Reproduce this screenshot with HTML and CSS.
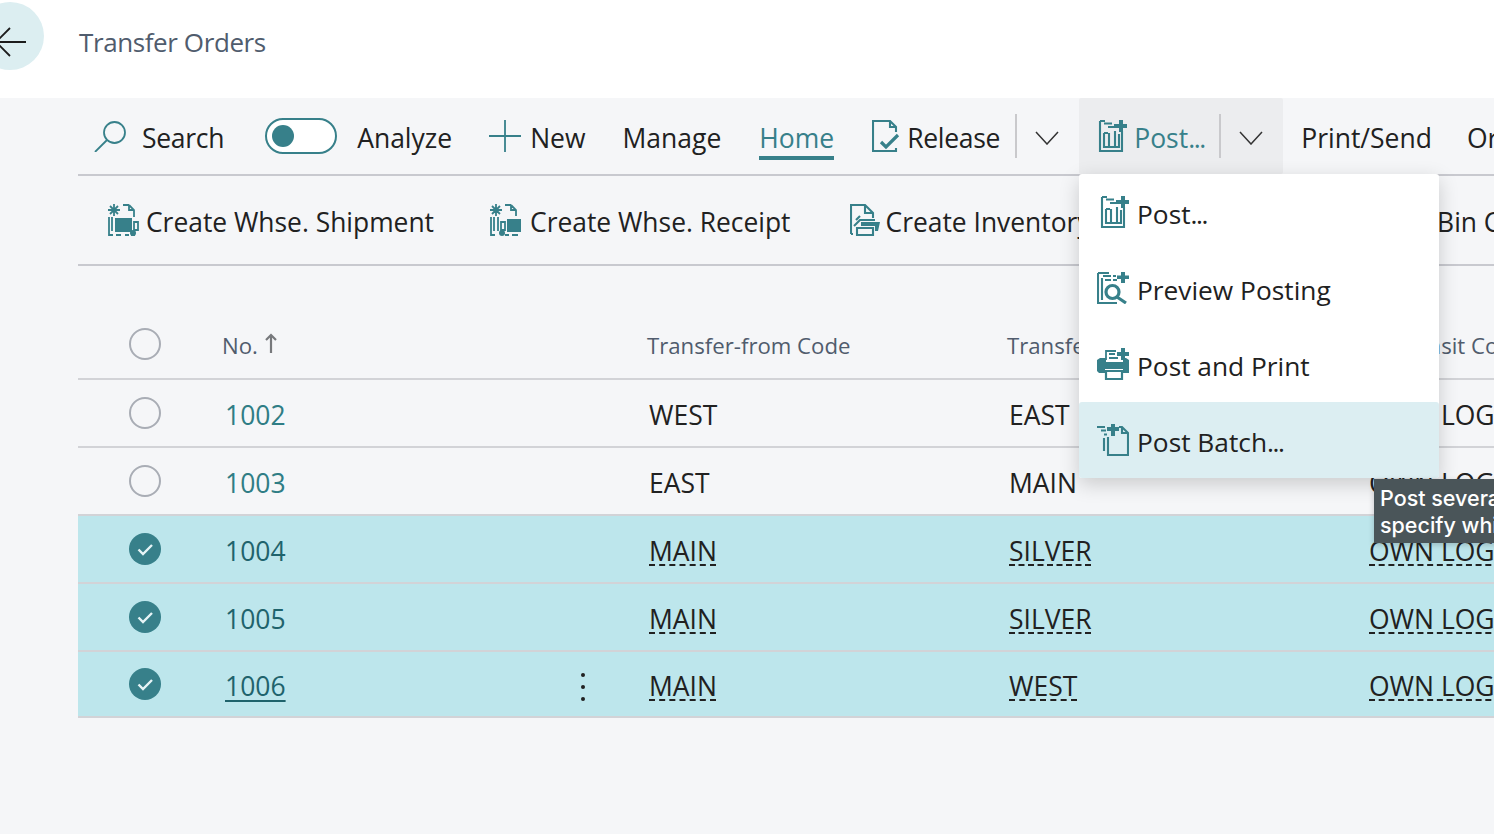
FILE: index.html
```html
<!DOCTYPE html>
<html lang="en">
<head>
<meta charset="utf-8">
<title>Transfer Orders</title>
<link rel="stylesheet" href="styles.css">
</head>
<body>
<svg class="defs" width="0" height="0" aria-hidden="true">
  <symbol id="i-post" viewBox="0 0 32 32">
    <path class="ln w2" d="M5 1V31H27V11M5 1H10M9 3.500h8M13 7h6M9 13V27H24V14M9 13h4M14 13V27M20 11V27"/>
    <path class="fl" d="M19 4h5V0h4v4h4v4h-4v4h-4V8h-5z"/>
  </symbol>
  <symbol id="i-preview" viewBox="0 0 32 32">
    <path class="ln w2" d="M1 1V31H20M1 1H12M5 28V6M6 4h8M16 4h3M8 8h6M16 8h4"/>
    <path class="fl" d="M20 3.500h4V0h4v3.500h4v3.500h-4v4h-4V7h-4z"/>
    <circle class="ln thick" cx="15.500" cy="20" r="6.500"/>
    <path class="ln thick" d="M20 25l9 6"/>
  </symbol>
  <symbol id="i-print" viewBox="0 0 32 32">
    <path class="fl" d="M3 10h6V14h17V10h3L32 12V25H26V21H8V25H2L0 23V12z"/>
    <path class="ln" d="M9 12V3H19M12 6h6M12 10h9"/>
    <path class="fl" d="M20 4h4V0h4v4h4v4h-4v4h-4V8h-4z"/>
    <path class="wf" d="M9 23H25V31H9z"/>
  </symbol>
  <symbol id="i-batch" viewBox="0 0 32 32">
    <path class="ln w2" d="M0 3h8M4 6.500h5M7 10.500h3M7 14V27"/>
    <path class="ln w2" d="M11 13V31H31V9L25 3H22M25 3V9H31"/>
    <path class="fl" d="M10 3h4V-1h4v4h4v4h-4v5h-4V7h-4z"/>
  </symbol>
  <symbol id="i-ship" viewBox="0 0 32 32">
    <path class="ln" d="M2 13V31H6M9 31h5M18 31h4M24 31h4M5 13V27M22 1H16M22 1L27 6V13M22 1V6H27"/>
    <path class="fl" d="M8 14H25V28H8z"/>
    <path class="ln" d="M27 18h4v8h-4zM3 2l8 8M11 2l-8 8M7 0V12M1 6H13"/>
    <circle class="fl" cx="26" cy="29" r="3"/>
  </symbol>
  <symbol id="i-receipt" viewBox="0 0 32 32">
    <path class="ln" d="M2 13V31H6M16 31h4M23 31h6M5 13V27M9 13V27M22 1H16M22 1L27 6V12M22 1V6H27M3 2l8 8M11 2l-8 8M7 0V12M1 6H13"/>
    <path class="ln" d="M12 18h4v8h-4z"/>
    <path class="fl" d="M18 15H32V28H18z"/>
    <circle class="fl" cx="13" cy="29" r="3"/>
  </symbol>
  <symbol id="i-inv" viewBox="2 0 30 32">
    <path class="ln w2" d="M3 30V1H17L25 9V14M17 1V9H25M3 30H5"/>
    <path class="ln w2" d="M8 16L12 12M6 22L12 16H27M9 24H25V31H9z"/>
    <path class="fl" d="M13 18H32L30 27H27V22H13z"/>
  </symbol>
</svg>

<header class="page-head">
  <button class="back" aria-label="Back">
    <svg width="44" height="44" viewBox="0 0 44 44"><path d="M32 21H2M16 7L2 21L16 35"/></svg>
  </button>
  <h1 class="title">Transfer Orders</h1>
</header>

<main class="page-body">
  <nav class="bar bar-main">
    <span class="act a-search">
      <svg class="ic32" viewBox="0 0 32 32"><circle class="ln" cx="20.500" cy="12.500" r="10.500"/><path class="ln" d="M13 20L1 32"/></svg>
      <span class="tight">Search</span>
    </span>
    <span class="toggle"><span class="knob"></span></span>
    <span class="act a-analyze">Analyze</span>
    <span class="act a-new">
      <svg class="ic32" viewBox="0 0 32 32"><path class="ln" d="M0 16H32M16 0V32"/></svg>
      New
    </span>
    <span class="act a-manage">Manage</span>
    <span class="act a-home">Home</span>
    <span class="act a-release">
      <svg class="ic-release" viewBox="0 0 28 32"><path class="ln w2" d="M24 12V7L18 1H1V31H24V28M18 1V7H24"/><path class="ln thick" d="M9 22l5 5 12-12"/></svg>
      <span class="tight">Release</span>
    </span>
    <span class="vsep s-release"></span>
    <svg class="chev c-release" viewBox="0 0 24 14"><path d="M1 1l11 12L23 1"/></svg>
    <span class="split">
      <span class="act act-post">
        <svg class="ic32"><use href="#i-post"/></svg>
        <span>Post<span class="dots">...</span></span>
      </span>
      <span class="vsep"></span>
      <svg class="chev" viewBox="0 0 24 14"><path d="M1 1l11 12L23 1"/></svg>
    </span>
    <span class="act a-print">Print/Send</span>
    <span class="act a-order">Order</span>
  </nav>

  <nav class="bar bar-sub">
    <span class="sub s1"><svg class="ic32"><use href="#i-ship"/></svg>Create Whse. Shipment</span>
    <span class="sub s2"><svg class="ic32"><use href="#i-receipt"/></svg>Create Whse. Receipt</span>
    <span class="sub s3"><svg class="ic30"><use href="#i-inv"/></svg>Create Inventory Put-away/Pick</span>
    <span class="sub s4">Bin Contents</span>
  </nav>

  <section class="grid">
    <div class="row head">
      <span class="cell-check"><i class="radio"></i></span>
      <span class="cell-no">No. <svg class="sort" viewBox="0 0 12 20"><path d="M6 20V2M1 7l5-5 5 5"/></svg></span>
      <span></span>
      <span class="cell-a">Transfer-from Code</span>
      <span class="cell-a">Transfer-to Code</span>
      <span class="cell-a">In-Transit Code</span>
    </div>
    <div class="row">
      <span class="cell-check"><i class="radio"></i></span>
      <a class="cell-no num">1002</a><span></span>
      <span class="cell-b">WEST</span><span class="cell-b">EAST</span><span class="cell-t">OWN LOG.</span>
    </div>
    <div class="row">
      <span class="cell-check"><i class="radio"></i></span>
      <a class="cell-no num">1003</a><span></span>
      <span class="cell-b">EAST</span><span class="cell-b">MAIN</span><span class="cell-t">OWN LOG.</span>
    </div>
    <div class="row sel">
      <span class="cell-check"><svg class="tick" viewBox="0 0 32 32"><circle cx="16" cy="16" r="16"/><path d="M9.500 16.500l4.500 4.500 9-9"/></svg></span>
      <a class="cell-no num">1004</a><span></span>
      <span class="cell-b"><u>MAIN</u></span><span class="cell-b"><u>SILVER</u></span><span class="cell-t"><u>OWN LOG.</u></span>
    </div>
    <div class="row sel">
      <span class="cell-check"><svg class="tick" viewBox="0 0 32 32"><circle cx="16" cy="16" r="16"/><path d="M9.500 16.500l4.500 4.500 9-9"/></svg></span>
      <a class="cell-no num">1005</a><span></span>
      <span class="cell-b"><u>MAIN</u></span><span class="cell-b"><u>SILVER</u></span><span class="cell-t"><u>OWN LOG.</u></span>
    </div>
    <div class="row sel last">
      <span class="cell-check"><svg class="tick" viewBox="0 0 32 32"><circle cx="16" cy="16" r="16"/><path d="M9.500 16.500l4.500 4.500 9-9"/></svg></span>
      <a class="cell-no num"><span class="cur">1006</span></a>
      <span class="cell-more"><i></i><i></i><i></i></span>
      <span class="cell-b"><u>MAIN</u></span><span class="cell-b"><u>WEST</u></span><span class="cell-t"><u>OWN LOG.</u></span>
    </div>
  </section>
</main>

<div class="menu" role="menu">
  <div class="mi"><svg class="ic32"><use href="#i-post"/></svg><span>Post<span class="dots">...</span></span></div>
  <div class="mi"><svg class="ic32"><use href="#i-preview"/></svg><span>Preview Posting</span></div>
  <div class="mi"><svg class="ic32"><use href="#i-print"/></svg><span>Post and Print</span></div>
  <div class="mi on"><svg class="ic32"><use href="#i-batch"/></svg><span>Post Batch<span class="dots">...</span></span></div>
</div>
<div class="tip">Post several transfer orders at once. A report request window opens where you can<br>specify which orders to post.</div>
</body>
</html>
```
FILE: styles.css
```css
* { box-sizing: border-box; }
html, body { margin: 0; padding: 0; }
body {
  width: 1494px;
  height: 834px;
  overflow: hidden;
  position: relative;
  background: #f5f6f8;
  font-family: "Open Sans", "Noto Sans", sans-serif;
  font-size: 26.500px;
  color: #212121;
}
.defs { position: absolute; }
.ln { fill: none; stroke: #37808a; stroke-width: 1.800; }
.w2 { stroke-width: 2.100; }
.thick { stroke-width: 3.200; }
.fl { fill: #37808a; }
.wf { fill: #fff; stroke: #37808a; stroke-width: 2.200; }
.dots { letter-spacing: -1.400px; }
.tight { letter-spacing: -0.300px; }

.page-head {
  height: 98px;
  background: #fff;
  display: flex;
  align-items: center;
}
.back {
  width: 68px;
  height: 68px;
  margin: -26px 0 0 -24px;
  border: 0;
  padding: 12px 0 0 18px;
  border-radius: 50%;
  background: #dceef1;
  flex: none;
}
.back svg { display: block; margin-top: 1px; }
.back path { fill: none; stroke: #1c1c1c; stroke-width: 1.800; }
.title {
  margin: -14px 0 0 35px;
  font-size: 26px;
  font-weight: 400;
  letter-spacing: -0.400px;
  color: #505c6d;
}

.page-body { padding-left: 78px; }
.bar { display: flex; align-items: center; white-space: nowrap; overflow: hidden; }
.bar-main { height: 78px; border-bottom: 2px solid #c8c9cf; position: relative; }
.bar-sub { height: 90px; border-bottom: 2px solid #c8c9cf; font-size: 26.400px; }
.act { display: flex; align-items: center; flex: none; padding-top: 3px; }
.act svg { margin-top: -3px; }
.ic32 { width: 32px; height: 32px; flex: none; display: block; }
.ic30 { width: 30px; height: 32px; flex: none; display: block; }
.a-search { margin-left: 16px; gap: 16px; }
.toggle {
  width: 72px; height: 36px; margin-left: 41px; flex: none;
  border: 2px solid #37808a; border-radius: 18px; background: #fff;
  display: flex; align-items: center; padding-left: 5px;
}
.knob { width: 22px; height: 22px; border-radius: 50%; background: #37808a; }
.a-analyze { margin-left: 20px; }
.a-new { margin-left: 37px; gap: 9px; }
.a-manage { margin-left: 37px; }
.a-home {
  margin-left: 38px; color: #37808a; height: 76px; position: relative;
}
.a-home::after {
  content: ""; position: absolute; left: 0; right: 0; top: 58px; height: 4px; background: #37808a;
}
.a-release { margin-left: 38px; gap: 7px; }
.ic-release { width: 28px; height: 32px; flex: none; }
.vsep { width: 2px; height: 44px; background: #c9c9cc; flex: none; }
.s-release { margin-left: 15px; }
.chev { width: 24px; height: 14px; flex: none; fill: none; stroke: #333; stroke-width: 1.500; margin-top: 3px; }
.c-release { margin-left: 18px; }
.split {
  margin-left: 20px; width: 204px; height: 76px; flex: none;
  background: #ecedef; display: flex; align-items: center; padding-left: 16px;
  border-radius: 2px;
}
.act-post { gap: 7px; color: #37808a; width: 109px; }
.split .vsep { margin-left: 15px; }
.split .chev { margin-left: 18px; }
.a-print { margin-left: 18px; }
.a-order { margin-left: 35px; }

.sub { display: flex; align-items: center; gap: 7px; flex: none; padding-top: 3px; }
.sub svg { margin-top: -3px; }
.s1 { margin-left: 29px; }
.s2 { margin-left: 55px; gap: 9px; }
.s3 { margin-left: 59px; gap: 6px; }
.s4 { margin-left: 168px; }

.row {
  display: grid;
  grid-template-columns: 134px 305px 119px 360px 360px 1fr;
  height: 68px;
  border-bottom: 2px solid #d2d3d7;
  align-items: center;
  white-space: nowrap;
  overflow: hidden;
}
.row.head {
  height: 114px;
  padding-top: 46px;
  font-size: 22.200px;
  color: #505c6d;
}
.head .cell-check { margin-top: -2px; }
.row.last { height: 66px; }
.cell-check { display: flex; justify-content: center; align-self: center; }
.radio { display: block; width: 32px; height: 32px; border: 2.500px solid #a9adb5; border-radius: 50%; }
.tick { width: 32px; height: 32px; display: block; }
.tick circle { fill: #37808a; }
.tick path { fill: none; stroke: #e6f4f6; stroke-width: 2.400; }
.cell-no { padding-left: 10px; display: flex; align-items: center; gap: 7px; }
.sort { width: 12px; height: 20px; fill: none; stroke: #77797c; stroke-width: 2.200; margin-top: -4px; }
.cell-a { padding-left: 11px; }
.cell-no.num { padding-left: 13px; color: #2f7d85; padding-top: 4px; }
.cell-b { padding-left: 13px; padding-top: 4px; }
.cell-t { padding-left: 13px; padding-top: 4px; }
.sel { background: #bde6ec; }
.sel .cell-no.num { color: #1f636c; }
.cur { text-decoration: underline; text-underline-offset: 4px; }
u { text-decoration: underline dashed #212121 2px; text-underline-offset: 3px; }
.cell-more { display: flex; flex-direction: column; align-items: center; gap: 8px; padding: 6px 0 0 13px; }
.cell-more i { width: 4px; height: 4px; border-radius: 50%; background: #212121; display: block; }

.menu {
  position: absolute; left: 1079px; top: 174px; width: 360px; height: 304px;
  background: #fff; border-radius: 3px;
  box-shadow: 0 6px 20px rgba(0,0,0,.18);
  font-size: 26.300px;
}
.mi { height: 76px; display: flex; align-items: center; gap: 8px; padding-left: 18px; white-space: nowrap; }
.mi > span { padding-top: 4px; }
.mi.on { background: #dceef2; border-radius: 3px; }
.tip {
  position: absolute; left: 1374px; top: 479px; width: 700px; height: 64px;
  background: #4a5559; color: #fff; padding: 6px 6px;
  font-family: "Inter", "Liberation Sans", sans-serif; font-size: 21.500px; font-weight: 500; line-height: 27px;
  white-space: nowrap;
  box-shadow: 0 2px 6px rgba(0,0,0,.2);
}
```
